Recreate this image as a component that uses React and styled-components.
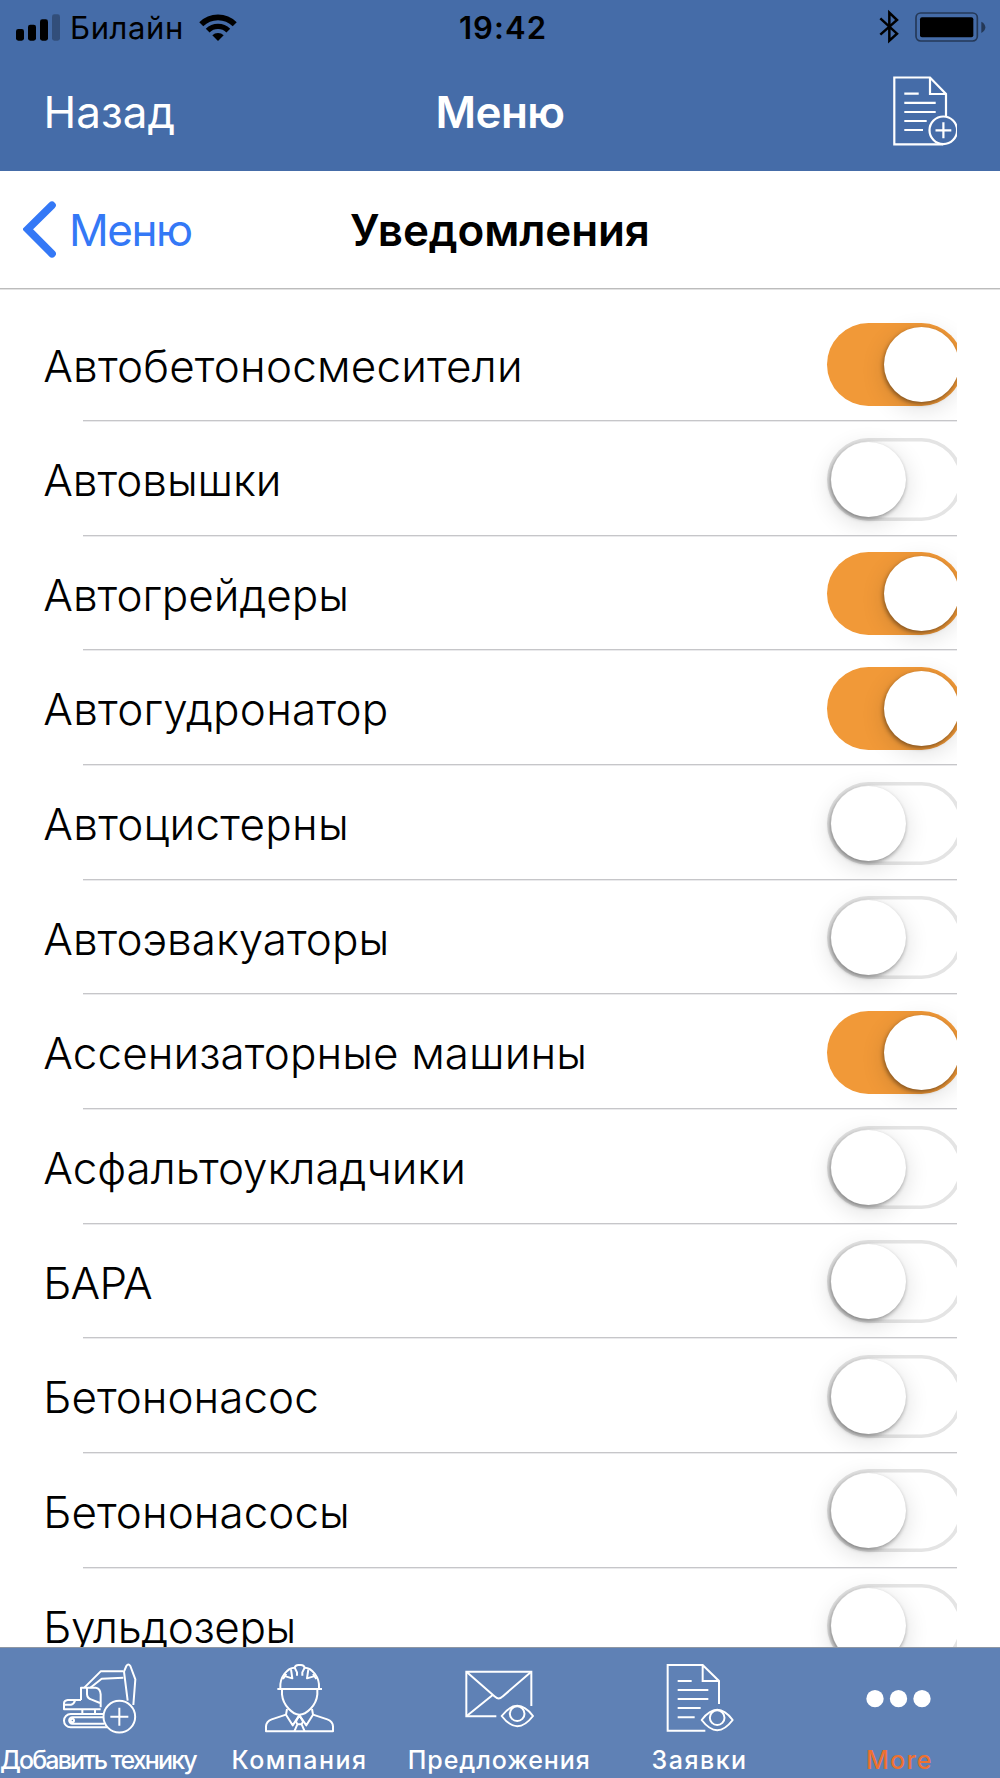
import React, { useState } from "react";
import styled, { createGlobalStyle } from "styled-components";

const GlobalStyle = createGlobalStyle`
  * { box-sizing: border-box; }
  html, body { margin: 0; padding: 0; background: #fff; }
  body { font-family: Inter, Roboto, "Liberation Sans", sans-serif; color: #000; }
`;

const Screen = styled.div`
  display: flex;
  flex-direction: column;
  width: 1000px;
  height: 1778px;
  overflow: hidden;
  background: #fff;
`;

const Text = styled.span`
  font-size: ${(p) => p.$size}px;
  font-weight: ${(p) => p.$weight || 400};
  letter-spacing: ${(p) => p.$tracking || 0}px;
  margin-right: ${(p) => -(p.$tracking || 0)}px;
  line-height: 1.2;
  white-space: nowrap;
`;

const Header = styled.header`
  flex: none;
  display: flex;
  flex-direction: column;
  height: 171.4px;
  background: #456ca8;
`;

const StatusBar = styled.div`
  display: grid;
  grid-template-columns: 1fr auto 1fr;
  align-items: center;
  height: 54.6px;
`;

const StatusLeft = styled.div`
  display: flex;
  align-items: center;
  padding-left: 16px;
`;

const Carrier = styled(Text)`
  margin-left: 10px;
`;

const Clock = styled(Text)`
  padding-left: 5px;
`;

const WifiIcon = styled.svg`
  margin-left: 15.5px;
`;

const StatusRight = styled.div`
  display: flex;
  justify-content: flex-end;
`;

const NavBar = styled.div`
  display: grid;
  grid-template-columns: 1fr auto 1fr;
  align-items: center;
  height: ${(p) => p.$height}px;
  padding: 0 43px 0 ${(p) => p.$left}px;
`;

const WhiteNavBar = styled(NavBar)`
  color: #fff;
`;

const SubNavBar = styled(NavBar)`
  flex: none;
  padding: 1px 23px 0;
  border-bottom: 1px solid #bcbcbc;
  box-shadow: 0 1px 0 #e2e2e2;
`;

const NavButton = styled.button`
  display: flex;
  align-items: center;
  justify-self: ${(p) => p.$side || "start"};
  padding: 0;
  border: 0;
  background: none;
  font-family: inherit;
  color: ${(p) => p.$color || "#fff"};
`;

const List = styled.main`
  flex: 1;
  min-height: 0;
  overflow: hidden;
  padding-top: 18.8px;
`;

const Row = styled.div`
  display: flex;
  flex-direction: column;
  width: 957px;
  height: 114.67px;
  overflow: hidden;
`;

const RowBody = styled.div`
  flex: 1;
  display: flex;
  align-items: center;
  justify-content: space-between;
  padding: 1.2px 0 0 43.3px;
`;

const RowLabel = styled(Text)`
  padding-top: 3px;
`;

const Divider = styled.div`
  flex: none;
  height: 1px;
  margin: 0 0 1px 82.5px;
  background: #c6c6c9;
  box-shadow: 0 1px 0 #eaeaec;
`;

const Track = styled.button`
  flex: none;
  display: flex;
  align-items: center;
  justify-content: ${(p) => (p.$on ? "flex-end" : "flex-start")};
  width: 136px;
  height: 83px;
  margin-right: -6px;
  padding: 0 4px;
  border: 0;
  border-radius: 42px;
  background: ${(p) => (p.$on ? "#f19938" : "#fff")};
  box-shadow: ${(p) => (p.$on ? "none" : "inset 0 0 0 3.6px #e4e4e4")};
`;

const Knob = styled.span`
  width: 75px;
  height: 75px;
  border-radius: 50%;
  background: #fff;
  box-shadow: -1px 2px 4px rgba(0, 0, 0, 0.4), 0 6px 24px rgba(0, 0, 0, 0.14);
`;

const TabBar = styled.nav`
  flex: none;
  display: grid;
  grid-template-columns: repeat(5, 200px);
  height: 131px;
  border-top: 1px solid #8f97a3;
  background: #5f81b5;
`;

const Tab = styled.div`
  display: flex;
  flex-direction: column;
  align-items: center;
  padding-top: 7px;
  color: ${(p) => (p.$active ? "#ee7130" : "#fff")};
`;

const TabLabel = styled(Text)`
  margin-top: 5px;
  padding-right: 2.4px;
  line-height: 30px;
`;

const TabSvg = styled.svg`
  flex: none;
  width: 90px;
  height: 85px;
  fill: none;
  stroke: #fff;
  stroke-width: 6;
  stroke-linejoin: round;
`;

function TabIcon({ children }) {
  return <TabSvg viewBox="0 0 270 255">{children}</TabSvg>;
}

const icons = {
  excavator: (
    <TabIcon>
      <path d="M88 98 L137 49 H205 M106 98 L140 71 L205 68" />
      <path d="M218 137 L207 50 L214 33 Q220 24 226 33 L241 73 L235 150" />
      <path d="M78 135 V98 H122 Q136 100 137 118 V157" />
      <path d="M96 98 V118 Q97 130 110 134 L135 144" />
      <path d="M137 163 H27 V144 Q28 136 38 135 H78 M28 149 H48 Q56 148 60 137" />
      <path d="M82 164 V174 M120 164 V174" />
      <path d="M146 177 H47 A20 20 0 0 0 47 217 H156" />
      <path d="M146 187 H52 A8 8 0 0 0 52 206 H148" />
      <circle cx="52" cy="196.500" r="5" />
      <circle cx="193" cy="185" r="47.500" />
      <path d="M166 185 H220 M193 158 V212" />
    </TabIcon>
  ),
  worker: (
    <TabIcon>
      <path d="M67 102 H201 M76 100 C73 66 98 38 119 38 M192 100 C195 66 170 38 149 38" />
      <path d="M126 62 V52 L119 38 Q122 30 130 30 H138 Q146 30 149 38 L142 52 V62" />
      <path d="M108 43 L112 70 L92 64 M160 43 L156 70 L176 64 M94 57 L84 72 M174 57 L184 72" />
      <path d="M81 104 V118 C84 152 114 179 133 179 C154 179 184 152 187 118 V104" />
      <path d="M96 162 L93 179 L50 193 Q34 199 33 214 V229 H234 V214 Q233 199 217 193 L174 179 L171 162" />
      <path d="M93 179 L113 211 L133 181 L154 211 L174 179" />
      <path d="M133 181 L123 199 L127 208 H140 L144 199 Z M127 208 L118 229 M140 208 L149 229" />
    </TabIcon>
  ),
  mail: (
    <TabIcon>
      <path d="M124 184 H34 V50 H229 V153" strokeLinejoin="miter" />
      <path d="M36 52 L120 125 Q131 136 142 125 L227 52 M36 182 L113 120" />
      <path d="M140 183 Q187 122 234 183 Q187 244 140 183 Z" />
      <circle cx="186.500" cy="176" r="22" />
    </TabIcon>
  ),
  requests: (
    <TabIcon>
      <path d="M151 227 H38 V30 H143 L192 78 V147 M143 30 V78 H192" strokeLinejoin="miter" />
      <path d="M68 78 H110 M68 105 H160 M68 132 H160 M68 159 H137 M68 187 H119" />
      <path d="M140 195 Q187 134 233 195 Q187 256 140 195 Z" />
      <circle cx="186.500" cy="188" r="22" />
    </TabIcon>
  ),
  more: (
    <TabIcon>
      <g fill="#fff" stroke="none">
        <circle cx="60" cy="131" r="26" />
        <circle cx="130.500" cy="131" r="26" />
        <circle cx="201" cy="131" r="26" />
      </g>
    </TabIcon>
  ),
};

const tabs = [
  { icon: "excavator", label: "Добавить технику", tracking: -1.87 },
  { icon: "worker", label: "Компания", tracking: 1.5 },
  { icon: "mail", label: "Предложения", tracking: 0.9 },
  { icon: "requests", label: "Заявки", tracking: 1.5 },
  { icon: "more", label: "More", tracking: 1.2, active: true },
];

const categories = [
  { label: "Автобетоносмесители", tracking: 0.18, on: true },
  { label: "Автовышки", tracking: -0.05, on: false },
  { label: "Автогрейдеры", tracking: 0, on: true },
  { label: "Автогудронатор", tracking: 0.24, on: true },
  { label: "Автоцистерны", tracking: 0.28, on: false },
  { label: "Автоэвакуаторы", tracking: 0, on: false },
  { label: "Ассенизаторные машины", tracking: 0.08, on: true },
  { label: "Асфальтоукладчики", tracking: 0, on: false },
  { label: "БАРА", tracking: -0.8, on: false },
  { label: "Бетононасос", tracking: 0, on: false },
  { label: "Бетононасосы", tracking: 0.03, on: false },
  { label: "Бульдозеры", tracking: -0.4, on: false },
];

function CategoryRow({ label, tracking, on }) {
  const [enabled, setEnabled] = useState(on);
  return (
    <Row>
      <RowBody>
        <RowLabel $size={44} $weight={300} $tracking={tracking}>{label}</RowLabel>
        <Track $on={enabled} role="switch" aria-checked={enabled} onClick={() => setEnabled(!enabled)}>
          <Knob />
        </Track>
      </RowBody>
      <Divider />
    </Row>
  );
}

export default function App() {
  return (
    <Screen>
      <GlobalStyle />
      <Header>
        <StatusBar>
          <StatusLeft>
            <svg width="44" height="27" viewBox="0 0 132 81">
              <rect x="0" y="45" width="24" height="35" rx="7" />
              <rect x="36" y="32" width="24" height="48" rx="7" />
              <rect x="72" y="16" width="24" height="64" rx="7" />
              <rect x="108" y="1" width="24" height="79" rx="7" opacity="0.27" />
            </svg>
            <Carrier $size={31} $tracking={0.6}>Билайн</Carrier>
            <WifiIcon width="38" height="27" viewBox="0 0 114 81">
              <g fill="none" stroke="#000">
                <path d="M6.800 31 A71 71 0 0 1 107.200 31" strokeWidth="17" />
                <path d="M26 50 A44 44 0 0 1 88 50" strokeWidth="16" />
              </g>
              <path d="M57 81 L40 64 A24 24 0 0 1 74 64 Z" />
            </WifiIcon>
          </StatusLeft>
          <Clock $size={31} $weight={600} $tracking={1.1}>19:42</Clock>
          <StatusRight>
            <svg width="140" height="45" viewBox="0 0 420 135">
              <path d="M61 40 L111 86 L88 107 V23 L111 45 L61 89" fill="none" stroke="#000" strokeWidth="7.500" />
              <rect x="168" y="24" width="184" height="84" rx="14" fill="none" stroke="#000" strokeOpacity="0.48" strokeWidth="5" />
              <rect x="180" y="37" width="160" height="60" rx="6" />
              <path d="M364 50 Q376 56 376 67 Q376 78 364 84 Z" fillOpacity="0.48" />
            </svg>
          </StatusRight>
        </StatusBar>
        <WhiteNavBar $height={114.8} $left={43.6}>
          <NavButton><Text $size={44}>Назад</Text></NavButton>
          <Text $size={44} $weight={600} $tracking={-0.6}>Меню</Text>
          <NavButton $side="end" aria-label="Добавить заявку">
            <svg width="67" height="76" viewBox="890 74 67 76" fill="none" stroke="#fff" strokeWidth="2.200">
              <path d="M943 144.300 H894.300 V77.500 H930 L946 94 V116 M930 77.500 V94 H946" />
              <path d="M904.300 93.700 H918.700 M904.300 102.800 H935.700 M904.300 112 H935.700 M904.300 121 H926.700 M904.300 130 H923" />
              <circle cx="943.300" cy="130.300" r="13.800" />
              <path d="M935.500 130.300 H951.300 M943.400 122.300 V138.300" />
            </svg>
          </NavButton>
        </WhiteNavBar>
      </Header>
      <SubNavBar $height={117.3}>
        <NavButton $color="#3478f6">
          <svg width="46" height="60" viewBox="0 0 138 180" fill="none" stroke="currentColor" strokeWidth="23" strokeLinecap="round">
            <path d="M87 16 L14 88 L87 161" />
          </svg>
          <Text $size={44} $tracking={-1.45}>Меню</Text>
        </NavButton>
        <Text $size={44} $weight={600} $tracking={-0.1}>Уведомления</Text>
      </SubNavBar>
      <List>
        {categories.map((item) => (
          <CategoryRow key={item.label} {...item} />
        ))}
      </List>
      <TabBar>
        {tabs.map((tab) => (
          <Tab key={tab.label} $active={tab.active}>
            {icons[tab.icon]}
            <TabLabel $size={25} $weight={500} $tracking={tab.tracking}>{tab.label}</TabLabel>
          </Tab>
        ))}
      </TabBar>
    </Screen>
  );
}
